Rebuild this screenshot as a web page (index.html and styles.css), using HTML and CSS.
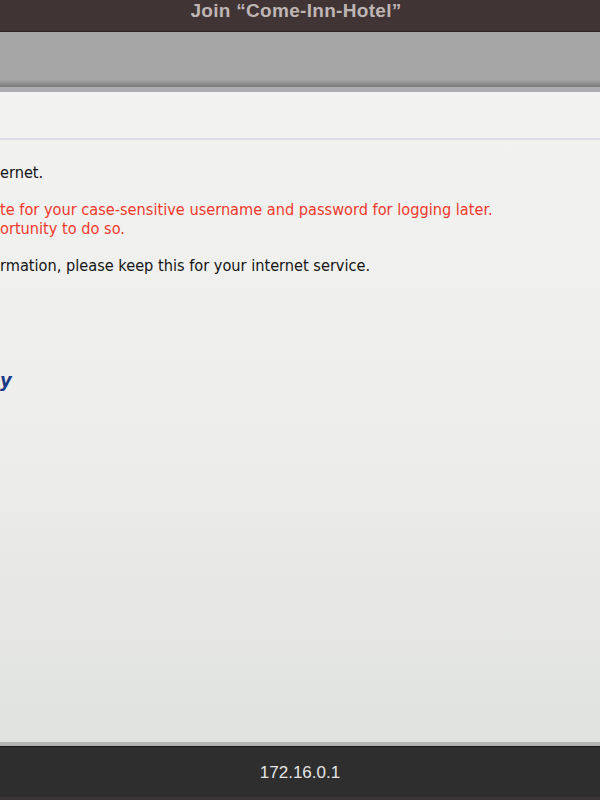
FILE: index.html
```html
<!DOCTYPE html>
<html>
<head>
<meta charset="utf-8">
<title>Join “Come-Inn-Hotel”</title>
<link rel="stylesheet" href="styles.css">
</head>
<body>
<div class="window">
  <header class="titlebar">Join “Come-Inn-Hotel”</header>
  <div class="toolbar"></div>
  <main class="content">
    <div class="pagehead"></div>
    <div class="text">
      <p class="line">ernet.</p>
      <p class="line red">te for your case-sensitive username and password for logging later.<br>ortunity to do so.</p>
      <p class="line">rmation, please keep this for your internet service.</p>
      <p class="brand">y</p>
    </div>
  </main>
  <footer class="statusbar">172.16.0.1</footer>
</div>
</body>
</html>
```

FILE: styles.css
```css
html, body {
  margin: 0;
  padding: 0;
  width: 600px;
  height: 800px;
  overflow: hidden;
}
.window {
  display: flex;
  flex-direction: column;
  height: 800px;
}
.titlebar {
  height: 31px;
  background: #403534;
  border-bottom: 1px solid #2b2423;
  color: #bfb5b4;
  font-family: "Liberation Sans", Arial, sans-serif;
  font-weight: bold;
  font-size: 19px;
  letter-spacing: 0.3px;
  line-height: 22px;
  text-align: center;
  padding-right: 8px;
}
.toolbar {
  height: 55px;
  background: linear-gradient(to bottom, #a5a5a5 0, #a5a5a5 48px, #939393 51px, #7a7a7a 55px);
  border-bottom: 5px solid #adadb1;
}
.content {
  flex: 1;
  background: linear-gradient(to bottom, #f2f2f0 0%, #eeeeed 50%, #e0e2e0 100%);
  font-family: "DejaVu Sans Condensed", "DejaVu Sans", sans-serif;
  font-size: 16.2px;
  color: #141414;
}
.pagehead {
  height: 46px;
  border-bottom: 2px solid #dcdce5;
}
.text {
  padding-top: 23px;
}
.line {
  margin: 0 0 18px 0;
  line-height: 19px;
}
.red {
  color: #f0392c;
}
.brand {
  margin: 93px 0 0 0;
  font-family: "DejaVu Sans Condensed", "DejaVu Sans", sans-serif;
  font-style: italic;
  font-weight: bold;
  font-size: 20px;
  color: #1a3a85;
  line-height: 24px;
}
.statusbar {
  height: 51px;
  background: #2e2e2e;
  border-top: 4px solid #b3b3b3;
  box-shadow: inset 0 1px 0 #1a1a1a;
  border-bottom: 3px solid #3a3535;
  color: #e6e6e6;
  font-family: "Liberation Sans", Arial, sans-serif;
  font-size: 17px;
  line-height: 53px;
  text-align: center;
}
```
